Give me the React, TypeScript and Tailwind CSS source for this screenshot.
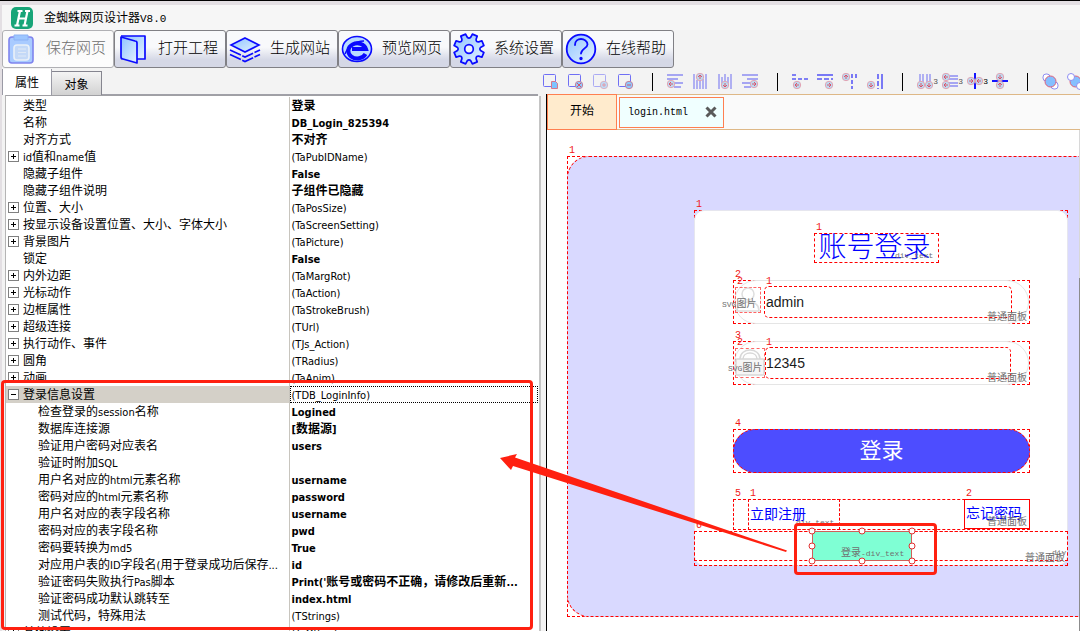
import React from 'react';

const CJK = "font-['Noto_Sans_CJK_SC',sans-serif]";
const UI = "font-['DejaVu_Sans_Condensed','Noto_Sans_CJK_SC',sans-serif]";
const MONO = "font-['Liberation_Mono','Noto_Sans_CJK_SC',monospace]";

/** Sets Latin runs in their own size beside the Chinese glyphs. */
function Mixed({ text, latin }: { text: string; latin: string }) {
  const parts = text.split(/([\x20-\x7e]+)/).filter(Boolean);
  return (
    <>
      {parts.map((p, i) =>
        /^[\x20-\x7e]+$/.test(p) ? (
          <span key={i} className={latin}>{p}</span>
        ) : (
          <React.Fragment key={i}>{p}</React.Fragment>
        ),
      )}
    </>
  );
}

/* ---------- main toolbar ---------- */

const grad = (id: string) => (
  <defs>
    <linearGradient id={id} x1="0" y1="0" x2="1" y2="1">
      <stop offset="0" stopColor="#8fc4ff" />
      <stop offset="1" stopColor="#e4f1ff" />
    </linearGradient>
  </defs>
);

const gear = (() => {
  const pts: string[] = [];
  for (let i = 0; i < 8; i++) {
    const a = (i * Math.PI) / 4 + Math.PI / 8;
    const p = (r: number, d: number) =>
      `${(16 + r * Math.cos(a + d)).toFixed(1)} ${(16 + r * Math.sin(a + d)).toFixed(1)}`;
    pts.push(`${i ? 'L' : 'M'}${p(12, -0.24)} L${p(15.3, -0.17)} L${p(15.3, 0.17)} L${p(12, 0.24)} Q${p(9.8, 0.39)} ${p(12, 0.545)}`);
  }
  return pts.join(' ') + 'Z';
})();

const mainTools = [
  {
    label: '保存网页',
    disabled: true,
    icon: (
      <svg viewBox="0 0 32 32" className="size-8">
        {grad('g1')}
        <rect x="4" y="4" width="24" height="26" rx="3" fill="#a9cbff" stroke="#7f84ee" strokeWidth="1.6" />
        <path d="M9 2h14v5H9z" fill="#9cc6ff" stroke="#8bb2f5" />
        <rect x="9" y="12" width="15" height="15" rx="3" fill="#c4d9f7" stroke="#eaf1f8" strokeWidth="1.6" />
        <path d="M13 16h8M13 19.5h8M13 23h8" stroke="#dfe9f6" />
      </svg>
    ),
  },
  {
    label: '打开工程',
    icon: (
      <svg viewBox="0 0 32 32" className="size-8" stroke="#0a0aff" strokeWidth="1.7" strokeLinejoin="round">
        {grad('g2')}
        <path d="M4 3h24v23h-8" fill="url(#g2)" />
        <path d="M4 4l14 4c1 0 2 1 2 2v20L6 26c-1 0-2-1-2-2z" fill="url(#g2)" />
      </svg>
    ),
  },
  {
    label: '生成网站',
    icon: (
      <svg viewBox="0 0 32 32" className="size-8" stroke="#0a0aff" strokeWidth="1.6" fill="none">
        {grad('g3')}
        <path d="M16 5l14 7-14 7L2 12z" fill="url(#g3)" />
        <path d="M1 17l15 7 15-7M1 21.500l15 7 15-7" strokeDasharray="12 1.500" />
      </svg>
    ),
  },
  {
    label: '预览网页',
    icon: (
      <svg viewBox="0 0 32 32" className="size-8" fill="none">
        <ellipse cx="16" cy="16" rx="14.500" ry="12.500" fill="#b8dbff" stroke="#0a0aff" strokeWidth="1.6" />
        <path d="M24.500 21a9 7.500 0 1 1 .5-5H11" stroke="#0a0aff" strokeWidth="4" />
        <path d="M4 21C7 13 14 8 23 8" stroke="#0a0aff" strokeWidth="1.4" />
      </svg>
    ),
  },
  {
    label: '系统设置',
    icon: (
      <svg viewBox="0 0 32 32" className="size-8" stroke="#0a0aff" strokeWidth="1.7" strokeLinejoin="round">
        {grad('g5')}
        <path d={gear} fill="url(#g5)" />
        <circle cx="16" cy="16" r="4.300" fill="#f0f3fa" />
      </svg>
    ),
  },
  {
    label: '在线帮助',
    icon: (
      <svg viewBox="0 0 32 32" className="size-8" stroke="#0a0aff" strokeWidth="1.8" strokeLinecap="round">
        {grad('g6')}
        <circle cx="16" cy="16" r="14.300" fill="url(#g6)" />
        <path d="M10 12c0-4 3-6 6-6s6.500 2 6.500 5.500S16 16 16 20.500" fill="none" />
        <circle cx="16" cy="25.500" r=".8" fill="#0a0aff" />
      </svg>
    ),
  },
];

function MainToolbar() {
  return (
    <div className={`flex h-[39px] shrink-0 items-start ${CJK}`}>
      {mainTools.map((t) => (
        <button
          key={t.label}
          disabled={t.disabled}
          className="flex h-[38px] w-28 items-center justify-between rounded-[3px] border border-[#808085] bg-linear-to-b from-[#f8f9fb] from-45% to-[#d5d8e6] to-80% pr-[7px] pl-[2px] text-[15px] text-black disabled:border-[#b0b0b4] disabled:from-[#fafafa] disabled:to-[#fcfcfc] disabled:text-[#6d6d6d]"
        >
          {t.icon}
          <span className="pb-1 font-light">{t.label}</span>
        </button>
      ))}
    </div>
  );
}

/* ---------- alignment toolbar ---------- */

const V = '#8d8df2';
const Dot = ({ x, y, mark = '', on = false }: { x: number; y: number; mark?: string; on?: boolean }) => (
  <>
    <circle cx={x} cy={y} r="3.700" fill={on ? '#8ccaff' : '#b9dcf3'} stroke={on ? '#c77f9a' : '#e3a3b3'} />
    <path d={`M${x} ${y} ${mark}`} stroke="#e0455c" strokeWidth=".9" fill="none" />
  </>
);
const H = 'm-2 0h4m-4 0l2-2m-2 2l2 2';
const HR = 'm-2 0h4m0 0l-2-2m2 2l-2 2';
const U = 'm0 2v-4m0 0l-2 2m2-2l2 2';
const D = 'm0-2v4m0 0l-2-2m2 2l2-2';
const page = 'M9 13.500H2.500a1 1 0 0 1-1-1v-10a1 1 0 0 1 1-1h10a1 1 0 0 1 1 1V9';

type Tool = { name: string; art: React.ReactNode; tail?: string } | null;
const smallTools: Tool[] = [
  { name: '新建页面', art: <><path d={page} stroke="#6f6ff5" /><path d="M9.500 8.500h4l2 2v5h-6z" fill="#7ec4ff" stroke="#d9798c" /></> },
  { name: '删除页面', art: <><path d={page} stroke="#6f6ff5" /><Dot x={12} y={12} on mark="m-2-2l4 4m0-4l-4 4" /></> },
  { name: '添加页面', art: <g opacity=".55"><path d={page} stroke="#6f6ff5" /><Dot x={12} y={12} on mark="m-2 0h4m-2-2v4" /></g> },
  { name: '移除页面', art: <><path d={page} stroke="#6f6ff5" /><Dot x={12} y={12} on mark="m-2 0h4" /></> },
  null,
  { name: '左对齐', art: <><path d="M0 2h16M0 6h11M5 10h11M7 14h7" stroke={V} strokeWidth="1.500" /><Dot x={4} y={11} mark={H} /></> },
  { name: '顶对齐', art: <><path d="M2 1v15M5 7v9M8 8v8M11 6v10M14 1v15" stroke={V} strokeWidth="1.300" /><Dot x={8} y={4} mark={U} /></> },
  { name: '底对齐', art: <><path d="M2 1v15M5 4v9M8 1v8M11 4v9M14 1v15" stroke={V} strokeWidth="1.300" /><Dot x={8} y={12} mark={D} /></> },
  { name: '右对齐', art: <><path d="M0 2h16M5 6h11M0 10h9M2 14h7" stroke={V} strokeWidth="1.500" /><Dot x={12} y={11} mark={HR} /></> },
  null,
  { name: '左等宽', art: <><path d="M0 2h5M0 6h16" stroke="#5a5af5" strokeWidth="1.600" strokeDasharray="4 2" /><Dot x={5} y={12} mark={H} /></> },
  { name: '右等宽', art: <><path d="M0 2h16" stroke="#5a5af5" strokeWidth="1.600" /><path d="M0 6h16" stroke="#5a5af5" strokeWidth="1.600" strokeDasharray="5 2" /><Dot x={12} y={12} mark={HR} /></> },
  { name: '上等高', art: <><path d="M10 1v15M14 1v5" stroke="#5a5af5" strokeWidth="1.600" strokeDasharray="4 2" /><Dot x={4} y={4} mark={U} /></> },
  { name: '下等高', art: <><path d="M15 1v15" stroke="#5a5af5" strokeWidth="1.600" /><path d="M11 1v15" stroke="#5a5af5" strokeWidth="1.600" strokeDasharray="5 2" /><Dot x={4} y={12} mark={D} /></> },
  null,
  { name: '横向间距', tail: 'text-[#555]', art: <><path d="M3 1v10M6 1v10M10 1v10M13 1v10" stroke={V} strokeWidth="1.300" /><Dot x={4} y={12} mark={D} /><Dot x={12} y={12} mark={D} /></> },
  { name: '纵向间距', tail: 'text-[#555]', art: <><path d="M6 3h10M6 6h10M6 10h10M6 13h10" stroke={V} strokeWidth="1.300" /><Dot x={4} y={4} mark={H} /><Dot x={4} y={12} mark={H} /></> },
  { name: '水平居中', tail: 'text-black', art: <><path d="M8 0v16" stroke="#1414ff" strokeWidth="2" /><Dot x={4} y={8} mark={HR} /><Dot x={12} y={8} mark={H} /></> },
  { name: '垂直居中', art: <><path d="M0 8h16" stroke="#1414ff" strokeWidth="2" /><Dot x={8} y={4} mark={D} /><Dot x={8} y={12} mark={U} /></> },
  null,
  { name: '置于顶层', art: <><rect x="1" y="1" width="7" height="7" rx="3" stroke={V} fill="#fff" /><rect x="9" y="9" width="7" height="7" rx="3" stroke={V} fill="#fff" /><circle cx="8.500" cy="8.500" r="5.500" fill="#85bfff" stroke="#e0607a" /></> },
  { name: '置于底层', art: <><circle cx="8.500" cy="8.500" r="5.500" fill="#85bfff" stroke="#e0607a" /><circle cx="4" cy="4" r="3.500" stroke={V} fill="#fff" /><circle cx="13" cy="13" r="3.500" stroke={V} fill="#fff" /></> },
];

function SmallToolbar() {
  return (
    <div className="flex h-[25px] shrink-0 items-center overflow-hidden bg-[#f3f3f3]">
      {smallTools.map((t, i) =>
        t ? (
          <button key={i} aria-label={t.name} className="relative flex w-[25px] shrink-0 items-center justify-center">
            <svg viewBox="0 0 17 17" className="size-[17px]" fill="none">{t.art}</svg>
            {t.tail && (
              <span className={`absolute top-1 right-0 text-[8px] leading-[10px] ${MONO} ${t.tail}`}>3</span>
            )}
          </button>
        ) : (
          <span key={i} className="flex w-[25px] shrink-0 justify-center pl-1">
            <span className="h-[18px] w-px bg-black" />
          </span>
        ),
      )}
    </div>
  );
}

/* ---------- property grid ---------- */

type Row = { k: string; v: string; t?: 'plus' | 'minus'; bold?: boolean; sub?: boolean };
const rows: Row[] = [
  { k: '类型', v: '登录', bold: true },
  { k: '名称', v: 'DB_Login_825394', bold: true },
  { k: '对齐方式', v: '不对齐', bold: true },
  { k: 'id值和name值', v: '(TaPubIDName)', t: 'plus' },
  { k: '隐藏子组件', v: 'False', bold: true },
  { k: '隐藏子组件说明', v: '子组件已隐藏', bold: true },
  { k: '位置、大小', v: '(TaPosSize)', t: 'plus' },
  { k: '按显示设备设置位置、大小、字体大小', v: '(TaScreenSetting)', t: 'plus' },
  { k: '背景图片', v: '(TaPicture)', t: 'plus' },
  { k: '锁定', v: 'False', bold: true },
  { k: '内外边距', v: '(TaMargRot)', t: 'plus' },
  { k: '光标动作', v: '(TaAction)', t: 'plus' },
  { k: '边框属性', v: '(TaStrokeBrush)', t: 'plus' },
  { k: '超级连接', v: '(TUrl)', t: 'plus' },
  { k: '执行动作、事件', v: '(TJs_Action)', t: 'plus' },
  { k: '圆角', v: '(TRadius)', t: 'plus' },
  { k: '动画', v: '(TaAnim)', t: 'plus' },
  { k: '登录信息设置', v: '(TDB_LoginInfo)', t: 'minus' },
  { k: '检查登录的session名称', v: 'Logined', bold: true, sub: true },
  { k: '数据库连接源', v: '[数据源]', bold: true, sub: true },
  { k: '验证用户密码对应表名', v: 'users', bold: true, sub: true },
  { k: '验证时附加SQL', v: '', sub: true },
  { k: '用户名对应的html元素名称', v: 'username', bold: true, sub: true },
  { k: '密码对应的html元素名称', v: 'password', bold: true, sub: true },
  { k: '用户名对应的表字段名称', v: 'username', bold: true, sub: true },
  { k: '密码对应的表字段名称', v: 'pwd', bold: true, sub: true },
  { k: '密码要转换为md5', v: 'True', bold: true, sub: true },
  { k: '对应用户表的ID字段名(用于登录成功后保存...', v: 'id', bold: true, sub: true },
  { k: '验证密码失败执行Pas脚本', v: "Print('账号或密码不正确，请修改后重新...", bold: true, sub: true },
  { k: '验证密码成功默认跳转至', v: 'index.html', bold: true, sub: true },
  { k: '测试代码，特殊用法', v: '(TStrings)', sub: true },
  { k: '其他设置', v: '(TaOther)', t: 'plus' },
];

function PropertyPanel() {
  return (
    <section className="flex w-[536px] shrink-0 flex-col">
      <div className={`flex h-[26px] shrink-0 items-end text-[12px] text-black ${CJK}`}>
        <button className="h-[26px] w-[50px] border-x border-[#9a9aa5] bg-white">属性</button>
        <button className="h-6 w-[50px] border-t border-r border-[#85858f] bg-linear-to-b from-[#f4f4f4] to-[#d2d2d2]">
          对象
        </button>
        <span className="h-px flex-1 bg-[#a0a0a8]" />
      </div>
      <div className="ml-[3px] min-h-0 flex-1 overflow-hidden border-t border-l border-t-[#a0a0a4] border-l-[#b5b5b5] bg-white pt-px">
        <table className={`w-full table-fixed border-collapse text-[12px] leading-[17px] text-black ${UI}`}>
          <colgroup>
            <col className="w-[283px]" />
            <col />
          </colgroup>
          <tbody>
            {rows.map((r, i) => {
              const open = r.t === 'minus';
              return (
                <tr key={i} className="h-[17px]">
                  <td className={`h-[17px] overflow-hidden border-r border-[#c8c5be] p-0 whitespace-nowrap ${open ? 'bg-[#d4d0c8]' : ''}`}>
                    <div className={`flex h-[17px] items-center ${r.sub ? 'pl-8' : 'pl-[2px]'}`}>
                      {!r.sub && (
                        <span className="w-[15px] shrink-0">
                          {r.t && (
                            <button aria-label={open ? '折叠' : '展开'} className="block size-[11px] border border-[#808080] bg-white">
                              <svg viewBox="0 0 9 9" className="size-[9px]" stroke="#000">
                                <path d={open ? 'M2 4.500h5' : 'M2 4.500h5M4.500 2v5'} />
                              </svg>
                            </button>
                          )}
                        </span>
                      )}
                      <span className="pt-[2px]"><Mixed text={r.k} latin="text-[11px]" /></span>
                    </div>
                  </td>
                  <td className="h-[17px] p-0 whitespace-nowrap">
                    <div className={`h-[17px] overflow-hidden pt-px pl-[2px] leading-[17px] ${open ? 'outline-1 -outline-offset-1 outline-dotted outline-black' : ''} ${r.bold ? 'font-bold' : ''}`}>
                      <Mixed text={r.v} latin="text-[11px]" />
                    </div>
                  </td>
                </tr>
              );
            })}
          </tbody>
        </table>
      </div>
    </section>
  );
}

/* ---------- design canvas ---------- */

const DASH = 'absolute border border-dashed border-[#ff0000]';

function Num({ n, at }: { n: string; at: string }) {
  return <span className={`absolute text-[10px] leading-[10px] text-[#f01818] ${MONO} ${at}`}>{n}</span>;
}

function Tag({ text, at }: { text: string; at: string }) {
  return (
    <span className={`absolute text-[10px] leading-3 whitespace-nowrap text-[#707070] ${MONO} ${at}`}>
      <Mixed text={text} latin="text-[8px]" />
    </span>
  );
}

const handles = [
  [4, 4], [54, 4], [104, 4], [4, 19], [104, 19], [4, 34], [54, 34], [104, 34],
];

function Canvas() {
  return (
    <div className={`relative min-h-0 flex-1 overflow-hidden bg-white ${CJK}`}>
      <div className={`${DASH} top-[26px] right-0 left-5 h-[461px]`} />
      <div className="absolute top-[26px] right-0 left-5 h-[461px] rounded-l-[22px] border border-r-0 border-dashed border-[#ff0000] bg-[#d9d9ff]" />
      <Num n="1" at="left-[22px] top-4" />

      <div className={`${DASH} top-20 left-[147px] h-[356px] w-[374px]`} />
      <div className="absolute top-20 left-[147px] h-[356px] w-[374px] rounded-[10px] border border-[#e6e6ee] bg-white" />
      <Num n="1" at="left-[149px] top-[70px]" />

      <h1 className={`${DASH} top-[103px] left-[267px] flex h-[30px] w-[125px] items-center justify-center pr-1 pb-[6px] text-[28px] leading-none font-light whitespace-nowrap text-[#0000ff]`}>
        账号登录
      </h1>
      <Num n="1" at="left-[269px] top-[93px]" />
      <Tag text="div_text" at="left-[348px] top-[120px]" />

      <div className={`${DASH} top-[150px] left-[186px] h-11 w-[297px]`} />
      <div className="absolute top-[150px] left-[187px] h-11 w-[295px] rounded-full border border-[#e5e5e5] bg-white" />
      <div className={`${DASH} top-[157px] left-[188px] h-[26px] w-[26px] opacity-60`} />
      <svg viewBox="0 0 26 26" className="absolute top-[157px] left-[188px] size-[26px]" fill="none" stroke="#dedede" strokeWidth="1.500">
        <circle cx="13" cy="7" r="6" />
        <path d="M2 24c0-6 4-9 11-9s11 3 11 9z" />
      </svg>
      <input
        aria-label="账号"
        defaultValue="admin"
        className="absolute top-[156px] left-[217px] h-8 w-[248px] rounded-[5px] border border-dashed border-[#ff0000] bg-white pl-px font-['Liberation_Sans',sans-serif] text-[14px] text-[#1a1a1a]"
      />
      <Num n="2" at="left-[188px] top-[140px]" />
      <Num n="2" at="left-[190px] top-[147px]" />
      <Num n="1" at="left-[219px] top-[147px]" />
      <Tag text="SVG图片" at="left-[175px] top-[169px]" />
      <Tag text="普通面板" at="left-[440px] top-[182px]" />

      <div className={`${DASH} top-[211px] left-[186px] h-11 w-[297px]`} />
      <div className="absolute top-[211px] left-[187px] h-11 w-[295px] rounded-full border border-[#e5e5e5] bg-white" />
      <div className={`${DASH} top-[218px] left-[188px] h-[30px] w-[30px] opacity-60`} />
      <svg viewBox="0 0 30 30" className="absolute top-[218px] left-[188px] size-[30px]" fill="none" stroke="#d8d8d8" strokeWidth="1.500">
        <path d="M5 11c0-12 20-12 20 0M8 11c0-8 14-8 14 0" />
        <rect x="1" y="11" width="28" height="16" rx="1" fill="#f6f6f6" />
      </svg>
      <input
        aria-label="密码"
        defaultValue="12345"
        className="absolute top-[217px] left-[218px] h-8 w-[246px] rounded-[5px] border border-dashed border-[#ff0000] bg-white font-['Liberation_Sans',sans-serif] text-[14px] text-[#1a1a1a]"
      />
      <Num n="3" at="left-[188px] top-[201px]" />
      <Num n="2" at="left-[190px] top-[208px]" />
      <Num n="1" at="left-[219px] top-[208px]" />
      <Tag text="SVG图片" at="left-[181px] top-[233px]" />
      <Tag text="普通面板" at="left-[440px] top-[243px]" />

      <div className={`${DASH} top-[299px] left-[186px] h-11 w-[297px]`} />
      <button className="absolute top-[299px] left-[186px] h-11 w-[297px] rounded-full border border-dashed border-[#ff0000] bg-[#4d4dff] pb-[6px] text-[22px] leading-none text-white">
        登录
      </button>
      <Num n="4" at="left-[188px] top-[289px]" />

      <div className={`${DASH} top-[369px] left-[186px] h-[31px] w-[297px]`} />
      <a href="#register" className={`${DASH} top-[369px] left-[201px] flex h-[31px] w-[92px] items-center pb-1 pl-px text-[14px] leading-none text-[#0000ff]`}>
        立即注册
      </a>
      <a href="#forgot" className="absolute top-[369px] left-[417px] flex h-[30px] w-[66px] items-center border border-[#ff0000] pb-1 pl-px text-[14px] leading-none text-[#0000ff]">
        忘记密码
      </a>
      <Num n="5" at="left-[188px] top-[359px]" />
      <Num n="1" at="left-[203px] top-[359px]" />
      <Num n="2" at="left-[419px] top-[359px]" />
      <Tag text="div_text" at="left-[249px] top-[387px]" />
      <Tag text="普通面板" at="left-[440px] top-[387px]" />

      <div className={`${DASH} top-[401px] left-[147px] h-[30px] w-[374px]`} />
      <div className={`${DASH} top-[401px] left-[147px] h-[35px] w-[374px]`} />
      <Num n="6" at="left-[149px] top-[391px]" />
      <Tag text="普通面板" at="left-[478px] top-[423px]" />
      <Tag text="div" at="left-[505px] top-[417px]" />

      <div className="absolute top-[401px] left-[265px] h-[30px] w-[100px] border border-[#d0605a] bg-[#7fffd4]" />
      <Tag text="登录-div_text" at="left-[294px] top-[418px]" />
      <svg viewBox="0 0 108 38" className="absolute top-[397px] left-[261px] h-[38px] w-[108px]" fill="#fff" stroke="#e03030">
        {handles.map(([x, y], i) => (
          <circle key={i} cx={x} cy={y} r="3" />
        ))}
      </svg>

      <div className="absolute top-0 right-0 bottom-0 w-px bg-[#d8d8d8]" />
      <div className="absolute top-[148px] right-0 bottom-0 w-px bg-[#8c8c8c]" />
    </div>
  );
}

function Workspace() {
  return (
    <section className="flex min-w-0 flex-1 flex-col">
      <SmallToolbar />
      <div className="flex min-h-0 flex-1">
        <div className="mt-[2px] flex w-2 shrink-0 bg-[#f3f3f3]">
          <span className="w-px bg-white" />
          <span className="w-[2px] bg-[#c4c4c4]" />
        </div>
        <div className="flex min-w-0 flex-1 flex-col border-l border-black">
          <div className="flex h-9 shrink-0 items-center border-y border-[#deb887] bg-[#fafafa] text-[12px] text-black">
            <button className={`-my-px h-9 w-[70px] border border-[#ff7f50] bg-[#ffebcd] pb-1 ${CJK}`}>开始</button>
            <div className="ml-[2px] flex h-[31px] w-[105px] items-center justify-between border border-[#ff7f50] bg-[#f0ffff] pr-[6px] pl-2">
              <span className={`text-[10px] ${MONO}`}>login.html</span>
              <button aria-label="关闭">
                <svg viewBox="0 0 12 12" className="size-3" stroke="#5a5a5a" strokeWidth="3">
                  <path d="M1.500 1.500l9 9M10.500 1.500l-9 9" />
                </svg>
              </button>
            </div>
          </div>
          <Canvas />
        </div>
      </div>
    </section>
  );
}

/* ---------- highlight marks ---------- */

function Marks() {
  return (
    <div className="pointer-events-none absolute inset-0 overflow-hidden">
      <div className="absolute top-[379px] left-px h-[250px] w-[532px] rounded-[4px] border-3 border-[#ff2010]" />
      <div className="absolute top-[522px] left-[794px] h-[52px] w-[143px] rounded-[4px] border-3 border-[#ff2010]" />
      <svg viewBox="0 0 290 100" className="absolute top-[452px] left-[499px] h-[100px] w-[290px]" fill="#ff2010">
        <path d="M1 5L18 1l-2 3.500L288 97.500l-1 1.500L14 13l-2 4z" />
      </svg>
    </div>
  );
}

export default function App() {
  return (
    <div className="relative flex h-screen flex-col overflow-hidden border-t border-black bg-[#e3dfe3] pt-1 pl-[2px]">
      <header className="flex h-[25px] shrink-0 items-center bg-[#f6f6f6] pl-2">
        <svg viewBox="0 0 24 24" className="size-6">
          <rect x="1" y="1" width="22" height="22" rx="5" fill="#18a578" />
          <path
            d="M7.500 5h5M15 5h5M4.500 19.500h5M12.500 19.500h5M10 5l-3 14.500M17.500 5l-3 14.500M9 12.500h7"
            stroke="#fff"
            strokeWidth="2.200"
          />
        </svg>
        <span className={`ml-[10px] text-[12px] text-black ${CJK}`}>
          金蜘蛛网页设计器<span className={MONO}><span className="text-[11px]">V8.0</span></span>
        </span>
      </header>
      <div className="flex min-h-0 flex-1 flex-col bg-[#f3f3f3]">
        <MainToolbar />
        <div className="flex min-h-0 flex-1">
          <PropertyPanel />
          <Workspace />
        </div>
      </div>
      <Marks />
    </div>
  );
}
